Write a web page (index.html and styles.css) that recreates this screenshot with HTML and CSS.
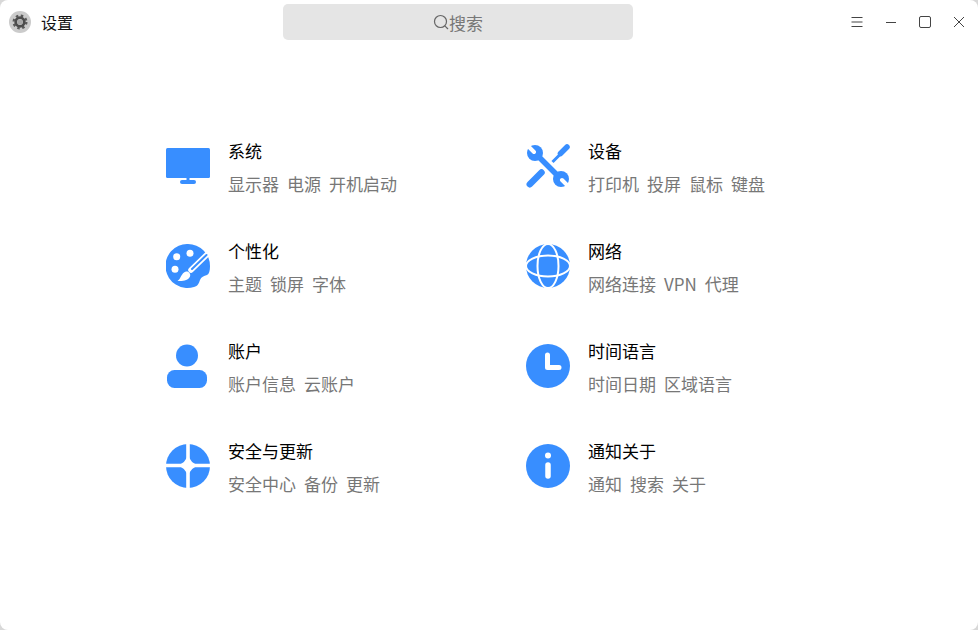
FILE: index.html
```html
<!DOCTYPE html>
<html lang="zh-CN">
<head>
<meta charset="utf-8">
<title>设置</title>
<link rel="stylesheet" href="styles.css">
</head>
<body>
<div class="window">
  <header class="titlebar">
    <div class="app">
      <svg class="logo" viewBox="0 0 22 22">
        <circle cx="11" cy="11" r="11" fill="#cbcbcb"/>
        <circle cx="11" cy="11" r="6.4" fill="none" stroke="#5a5a5a" stroke-width="2.2" stroke-dasharray="2.5 2.53"/>
        <circle cx="11" cy="11" r="4.3" fill="none" stroke="#4d4d4d" stroke-width="2.8"/>
        <circle cx="11" cy="11" r="2.6" fill="#a8a8a8"/>
      </svg>
      <span class="app-name">设置</span>
    </div>
    <div class="search">
      <svg class="search-icon" viewBox="0 0 16 16"><circle cx="7.5" cy="7.5" r="6" fill="none" stroke="#666" stroke-width="1.2"/><path d="M11.8 11.8 15 15" stroke="#666" stroke-width="1.2"/></svg>
      <span>搜索</span>
    </div>
    <div class="controls">
      <svg class="ctl" viewBox="0 0 14 14"><path d="M1.5 2.5h11M1.5 7h11M1.5 11.5h11" stroke="#444" fill="none"/></svg>
      <svg class="ctl" viewBox="0 0 14 14"><path d="M2 7.5h10" stroke="#444" fill="none"/></svg>
      <svg class="ctl" viewBox="0 0 14 14"><rect x="1.5" y="1.5" width="11" height="11" rx="1.5" stroke="#444" fill="none"/></svg>
      <svg class="ctl" viewBox="0 0 14 14"><path d="M2 2l10 10M12 2 2 12" stroke="#444" fill="none"/></svg>
    </div>
  </header>
  <main class="grid">
    <section class="item">
      <svg class="icon" viewBox="0 0 44 44"><rect y="4" width="44" height="30" rx="1.5" fill="#388eff"/><rect x="20.5" y="34" width="3" height="3" fill="#388eff"/><rect x="14" y="36" width="16" height="4" rx="2" fill="#388eff"/></svg>
      <div class="text"><h2>系统</h2><p><span>显示器</span><span>电源</span><span>开机启动</span></p></div>
    </section>
    <section class="item">
      <svg class="icon" viewBox="0 0 44 44">
        <path d="M26.5 18 34 10.5" stroke="#388eff" stroke-width="3" fill="none"/>
        <path d="M34.5 9.5 41 3" stroke="#388eff" stroke-width="5.5" stroke-linecap="round" fill="none"/>
        <path d="M3.8 40.2 15.5 28.5" stroke="#388eff" stroke-width="6.5" stroke-linecap="round" fill="none"/>
        <path d="M9 9 35 35" stroke="#388eff" stroke-width="5.5" fill="none"/>
        <circle cx="9" cy="9" r="8" fill="#388eff"/>
        <circle cx="35" cy="35" r="8" fill="#388eff"/>
        <path d="M2 2 8 8M42 42 36 36" stroke="#fff" stroke-width="4" stroke-linecap="round" fill="none"/>
      </svg>
      <div class="text"><h2>设备</h2><p><span>打印机</span><span>投屏</span><span>鼠标</span><span>键盘</span></p></div>
    </section>
    <section class="item">
      <svg class="icon" viewBox="0 0 44 44">
        <path d="M22 0A22 22 0 1 0 28 43C32 42 33 39 34 36 35 33 38 32 41 31 43 30 44 27 44 22A22 22 0 0 0 22 0Z" fill="#388eff"/>
        <circle cx="10.7" cy="12.7" r="3.5" fill="#fff"/><circle cx="24" cy="9.3" r="3.5" fill="#fff"/><circle cx="9" cy="25.3" r="3.5" fill="#fff"/>
        <path d="M25 26 41 10.5" stroke="#fff" stroke-width="5.5" stroke-linecap="round" fill="none"/>
        <path d="M26 25 40.5 11" stroke="#388eff" stroke-width="2" stroke-linecap="round" fill="none"/>
        <path d="M11.5 37C15 35 15 29 20 27.5 23 27 25 30 24 32.5 22 36.5 17 37.5 11.5 37Z" fill="#fff"/>
      </svg>
      <div class="text"><h2>个性化</h2><p><span>主题</span><span>锁屏</span><span>字体</span></p></div>
    </section>
    <section class="item">
      <svg class="icon" viewBox="0 0 44 44">
        <circle cx="22" cy="22" r="22" fill="#388eff"/>
        <ellipse cx="22" cy="22" rx="22" ry="10.5" fill="none" stroke="#fff" stroke-width="2"/>
        <ellipse cx="22" cy="22" rx="10.5" ry="22" fill="none" stroke="#fff" stroke-width="2"/>
      </svg>
      <div class="text"><h2>网络</h2><p><span>网络连接</span><span>VPN</span><span>代理</span></p></div>
    </section>
    <section class="item">
      <svg class="icon" viewBox="0 0 44 44"><circle cx="21" cy="11.5" r="11" fill="#388eff"/><rect x="1" y="26" width="40" height="18" rx="7.5" fill="#388eff"/></svg>
      <div class="text"><h2>账户</h2><p><span>账户信息</span><span>云账户</span></p></div>
    </section>
    <section class="item">
      <svg class="icon" viewBox="0 0 44 44"><circle cx="22" cy="22" r="22" fill="#388eff"/><path d="M21.5 11V23.5H33" fill="none" stroke="#fff" stroke-width="5" stroke-linecap="round" stroke-linejoin="round"/></svg>
      <div class="text"><h2>时间语言</h2><p><span>时间日期</span><span>区域语言</span></p></div>
    </section>
    <section class="item">
      <svg class="icon" viewBox="0 0 44 44">
        <circle cx="22" cy="22" r="22" fill="#388eff"/>
        <path d="M22 0V44M0 21.5H44" stroke="#fff" stroke-width="3.6" fill="none"/>
        <path d="M22 10Q24 20 34 21.5 24 23 22 33 20 23 10 21.5 20 20 22 10Z" fill="#fff"/>
      </svg>
      <div class="text"><h2>安全与更新</h2><p><span>安全中心</span><span>备份</span><span>更新</span></p></div>
    </section>
    <section class="item">
      <svg class="icon" viewBox="0 0 44 44"><circle cx="22" cy="22" r="22" fill="#388eff"/><circle cx="22" cy="11.5" r="3" fill="#fff"/><path d="M22 21V32" stroke="#fff" stroke-width="5.5" stroke-linecap="round" fill="none"/></svg>
      <div class="text"><h2>通知关于</h2><p><span>通知</span><span>搜索</span><span>关于</span></p></div>
    </section>
  </main>
</div>
</body>
</html>
```
FILE: styles.css
```css
* { box-sizing: border-box; }
html, body { margin: 0; height: 100%; background: #d8d8d8; }
body { font-family: "Noto Sans CJK SC", "Noto Sans", sans-serif; overflow: hidden; }
.window { height: 630px; background: #fff; border-radius: 8px; display: flex; flex-direction: column; }
.titlebar { height: 44px; flex: none; display: grid; grid-template-columns: 283px 350px 1fr; align-items: center; }
.app { display: flex; align-items: center; gap: 10px; padding-left: 9px; }
.logo { width: 22px; height: 22px; flex: none; }
.app-name { font-size: 16px; color: #111; line-height: 22px; }
.search { height: 36px; background: #e5e5e5; border-radius: 5px; display: flex; align-items: center; justify-content: center; color: #777; font-size: 17px; }
.search-icon { width: 16px; height: 16px; flex: none; }
.controls { display: flex; justify-content: flex-end; align-items: center; gap: 20px; padding-right: 12px; }
.ctl { width: 14px; height: 14px; flex: none; }
.grid { display: grid; grid-template-columns: 360px 360px; grid-auto-rows: 100px; padding: 72px 0 0 166px; }
.item { display: flex; gap: 18px; align-items: center; }
.icon { width: 44px; height: 44px; flex: none; }
.text { display: flex; flex-direction: column; gap: 9px; padding-top: 2px; }
h2 { margin: 0; font-size: 17px; font-weight: 400; line-height: 24px; color: #000; }
p { margin: 0; font-size: 17px; line-height: 24px; color: #777; display: flex; gap: 8px; }
```
